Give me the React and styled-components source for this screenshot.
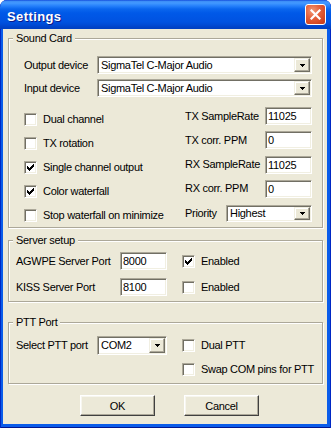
import React from 'react';
import styled, { createGlobalStyle } from 'styled-components';

const Global = createGlobalStyle`
  html, body { margin: 0; padding: 0; background: #ffffff; }
  body { font-family: "Liberation Sans", Arial, sans-serif; font-size: 11px; letter-spacing: -0.3px; color: #000; }
  * { box-sizing: border-box; }
`;

const Window = styled.div`
  width: 331px;
  height: 428px;
  display: flex;
  flex-direction: column;
  background: #0A5CEA;
  border-radius: 7px 7px 0 0;
  overflow: hidden;
  box-shadow: inset 1px 0 #0028C4, inset -1px 0 #0028C4, inset 0 -1px #00158F;
`;

const TitleBar = styled.div`
  height: 29px;
  flex: none;
  display: flex;
  align-items: center;
  justify-content: space-between;
  padding: 3px 5px 0 7px;
  border-radius: 7px 7px 0 0;
  background: linear-gradient(180deg,
    #0A3BD6 0px, #3B8CF5 1px, #4399FF 3px, #2580FB 6px, #0A66EE 9px,
    #0059E8 13px, #0055E4 18px, #0052E0 22px, #004AD4 25px, #0043C8 27px, #003FC0 29px);
`;

const Title = styled.span`
  font: bold 13px "Liberation Sans", Arial, sans-serif;
  color: #ffffff;
  letter-spacing: 0.4px;
  text-shadow: 1px 1px #0A1A8A;
`;

const CloseButton = styled.div`
  align-self: flex-start;
  margin-top: 1px;
  width: 21px;
  height: 21px;
  border: 1px solid #ffffff;
  border-radius: 3px;
  display: flex;
  align-items: center;
  justify-content: center;
  background: radial-gradient(circle at 35% 30%, #F29A78 0%, #E5623D 40%, #D0431F 80%, #C23A18 100%);
`;

const Client = styled.div`
  flex: 1;
  margin: 0 4px 4px 3px;
  background: #ECE9D8;
  padding: 3px 4px 0 5px;
  display: flex;
  flex-direction: column;
`;

const Group = styled.fieldset`
  margin: ${p => p.$mt || 0}px 0 0;
  padding: 0;
  min-inline-size: 0;
  border: 1px solid #ACA899;
  box-shadow: inset 1px 1px #ffffff, 1px 1px #ffffff;
`;

const Legend = styled.legend`
  margin-left: 4px;
  padding: 0 3px;
  line-height: 13px;
  font-size: 11px;
  background: #ECE9D8;
`;

const GroupBody = styled.div`
  padding: ${p => p.$pad};
`;

const SelectRow = styled.div`
  display: grid;
  grid-template-columns: 73px 1fr;
  align-items: center;
  height: 18px;
  & + & { margin-top: 5px; }
`;

const Lower = styled.div`
  display: grid;
  grid-template-columns: 161px 1fr;
  margin-top: 10px;
`;

const CheckColumn = styled.div`
  display: flex;
  flex-direction: column;
  gap: 11px;
  padding-top: ${p => p.$pt || 0}px;
  margin-left: ${p => p.$ml || 0}px;
`;

const FieldColumn = styled.div`
  display: flex;
  flex-direction: column;
  gap: 6.25px;
`;

const FieldRow = styled.div`
  display: flex;
  justify-content: space-between;
  align-items: center;
  height: 18px;
`;

const Label = styled.span`
  white-space: nowrap;
  line-height: 13px;
`;

const CheckRow = styled.label`
  display: flex;
  align-items: center;
  gap: 6px;
  height: 13px;
  line-height: 13px;
  white-space: nowrap;
  margin-left: ${p => p.$ml || 0}px;
`;

const Box = styled.span`
  width: 13px;
  height: 13px;
  flex: none;
  display: flex;
  align-items: center;
  justify-content: center;
  background: #ffffff;
  border: 1px solid;
  border-color: #ACA899 #ffffff #ffffff #ACA899;
  box-shadow: inset 1px 1px #716F64, inset -1px -1px #F1EFE2;
`;

const Sunken = styled.div`
  width: ${p => p.$w ? `${p.$w}px` : '100%'};
  height: ${p => p.$h || 18}px;
  display: flex;
  align-items: stretch;
  background: #ffffff;
  border: 1px solid;
  border-color: #ACA899 #ffffff #ffffff #ACA899;
  box-shadow: inset 1px 1px #716F64, inset -1px -1px #F1EFE2;
  padding: 1px;
`;

const Value = styled.span`
  flex: 1;
  padding-left: ${p => p.$pl ?? 2}px;
  line-height: ${p => (p.$h || 18) - 4}px;
  white-space: nowrap;
  overflow: hidden;
`;

const DropButton = styled.span`
  width: 16px;
  flex: none;
  display: flex;
  align-items: center;
  justify-content: center;
  background: #ECE9D8;
  border: 1px solid;
  border-color: #F1EFE2 #716F64 #716F64 #F1EFE2;
  box-shadow: inset -1px -1px #ACA899, inset 1px 1px #ffffff;
`;

const ServerRow = styled.div`
  display: grid;
  grid-template-columns: 104px 47px auto;
  align-items: center;
  height: 18px;
  & + & { margin-top: 8px; }
`;

const PttGrid = styled.div`
  display: grid;
  grid-template-columns: 81px 70px auto;
  align-items: start;
`;

const PttLabel = styled.span`
  line-height: 19px;
  white-space: nowrap;
`;

const ButtonRow = styled.div`
  display: flex;
  gap: 29px;
  margin-top: 11px;
  padding-left: 72px;
`;

const Button = styled.button`
  width: 75px;
  height: 21px;
  padding: 0;
  font: 11px "Liberation Sans", Arial, sans-serif;
  letter-spacing: -0.3px;
  color: #000;
  background: #ECE9D8;
  border: 1px solid;
  border-color: #ffffff #404040 #404040 #ffffff;
  box-shadow: inset -1px -1px #ACA899, inset 1px 1px #F7F6EF;
`;

const Tick = () => (
  <svg width="7" height="7" viewBox="0 0 7 7" shapeRendering="crispEdges">
    <g fill="#000">
      <rect x="6" y="0" width="1" height="1" />
      <rect x="5" y="1" width="2" height="1" />
      <rect x="0" y="2" width="1" height="1" />
      <rect x="4" y="2" width="3" height="1" />
      <rect x="0" y="3" width="2" height="1" />
      <rect x="3" y="3" width="3" height="1" />
      <rect x="0" y="4" width="5" height="1" />
      <rect x="1" y="5" width="3" height="1" />
      <rect x="2" y="6" width="1" height="1" />
    </g>
  </svg>
);

const Arrow = () => (
  <svg width="5" height="3" viewBox="0 0 5 3" shapeRendering="crispEdges">
    <g fill="#000">
      <rect x="0" y="0" width="5" height="1" />
      <rect x="1" y="1" width="3" height="1" />
      <rect x="2" y="2" width="1" height="1" />
    </g>
  </svg>
);

const Check = ({ checked, children, ml }) => (
  <CheckRow $ml={ml}>
    <Box>{checked && <Tick />}</Box>
    {children}
  </CheckRow>
);

const Combo = ({ value, w, h = 18 }) => (
  <Sunken $w={w} $h={h}>
    <Value $h={h}>{value}</Value>
    <DropButton><Arrow /></DropButton>
  </Sunken>
);

const Edit = ({ value, w = 47, h = 18 }) => (
  <Sunken $w={w} $h={h}>
    <Value $h={h} $pl={1}>{value}</Value>
  </Sunken>
);

export default function App() {
  return (
    <>
      <Global />
      <Window>
        <TitleBar>
          <Title>Settings</Title>
          <CloseButton>
            <svg width="11" height="11" viewBox="0 0 11 11">
              <path d="M1.5 1.5 L9.5 9.5 M9.5 1.5 L1.5 9.5" stroke="#ffffff" strokeWidth="2.2" strokeLinecap="square" />
            </svg>
          </CloseButton>
        </TitleBar>
        <Client>
          <Group>
            <Legend>Sound Card</Legend>
            <GroupBody $pad="11px 10px 5px 15px">
              <SelectRow>
                <Label>Output device</Label>
                <Combo value="SigmaTel C-Major Audio" />
              </SelectRow>
              <SelectRow>
                <Label>Input device</Label>
                <Combo value="SigmaTel C-Major Audio" />
              </SelectRow>
              <Lower>
                <CheckColumn $pt={6}>
                  <Check>Dual channel</Check>
                  <Check>TX rotation</Check>
                  <Check checked>Single channel output</Check>
                  <Check checked>Color waterfall</Check>
                  <Check>Stop waterfall on minimize</Check>
                </CheckColumn>
                <FieldColumn>
                  <FieldRow><Label>TX SampleRate</Label><Edit value="11025" /></FieldRow>
                  <FieldRow><Label>TX corr. PPM</Label><Edit value="0" /></FieldRow>
                  <FieldRow><Label>RX SampleRate</Label><Edit value="11025" /></FieldRow>
                  <FieldRow><Label>RX corr. PPM</Label><Edit value="0" /></FieldRow>
                  <FieldRow><Label>Priority</Label><Combo value="Highest" w={86} h={17} /></FieldRow>
                </FieldColumn>
              </Lower>
            </GroupBody>
          </Group>

          <Group $mt={6}>
            <Legend>Server setup</Legend>
            <GroupBody $pad="5px 0 5px 7px">
              <ServerRow>
                <Label>AGWPE Server Port</Label>
                <Edit value="8000" />
                <Check checked ml={15}>Enabled</Check>
              </ServerRow>
              <ServerRow>
                <Label>KISS Server Port</Label>
                <Edit value="8100" />
                <Check ml={15}>Enabled</Check>
              </ServerRow>
            </GroupBody>
          </Group>

          <Group $mt={14}>
            <Legend>PTT Port</Legend>
            <GroupBody $pad="7px 0 7px 7px">
              <PttGrid>
                <PttLabel>Select PTT port</PttLabel>
                <Combo value="COM2" w={70} h={19} />
                <CheckColumn $pt={3} $ml={15}>
                  <Check>Dual PTT</Check>
                  <Check>Swap COM pins for PTT</Check>
                </CheckColumn>
              </PttGrid>
            </GroupBody>
          </Group>

          <ButtonRow>
            <Button>OK</Button>
            <Button>Cancel</Button>
          </ButtonRow>
        </Client>
      </Window>
    </>
  );
}
